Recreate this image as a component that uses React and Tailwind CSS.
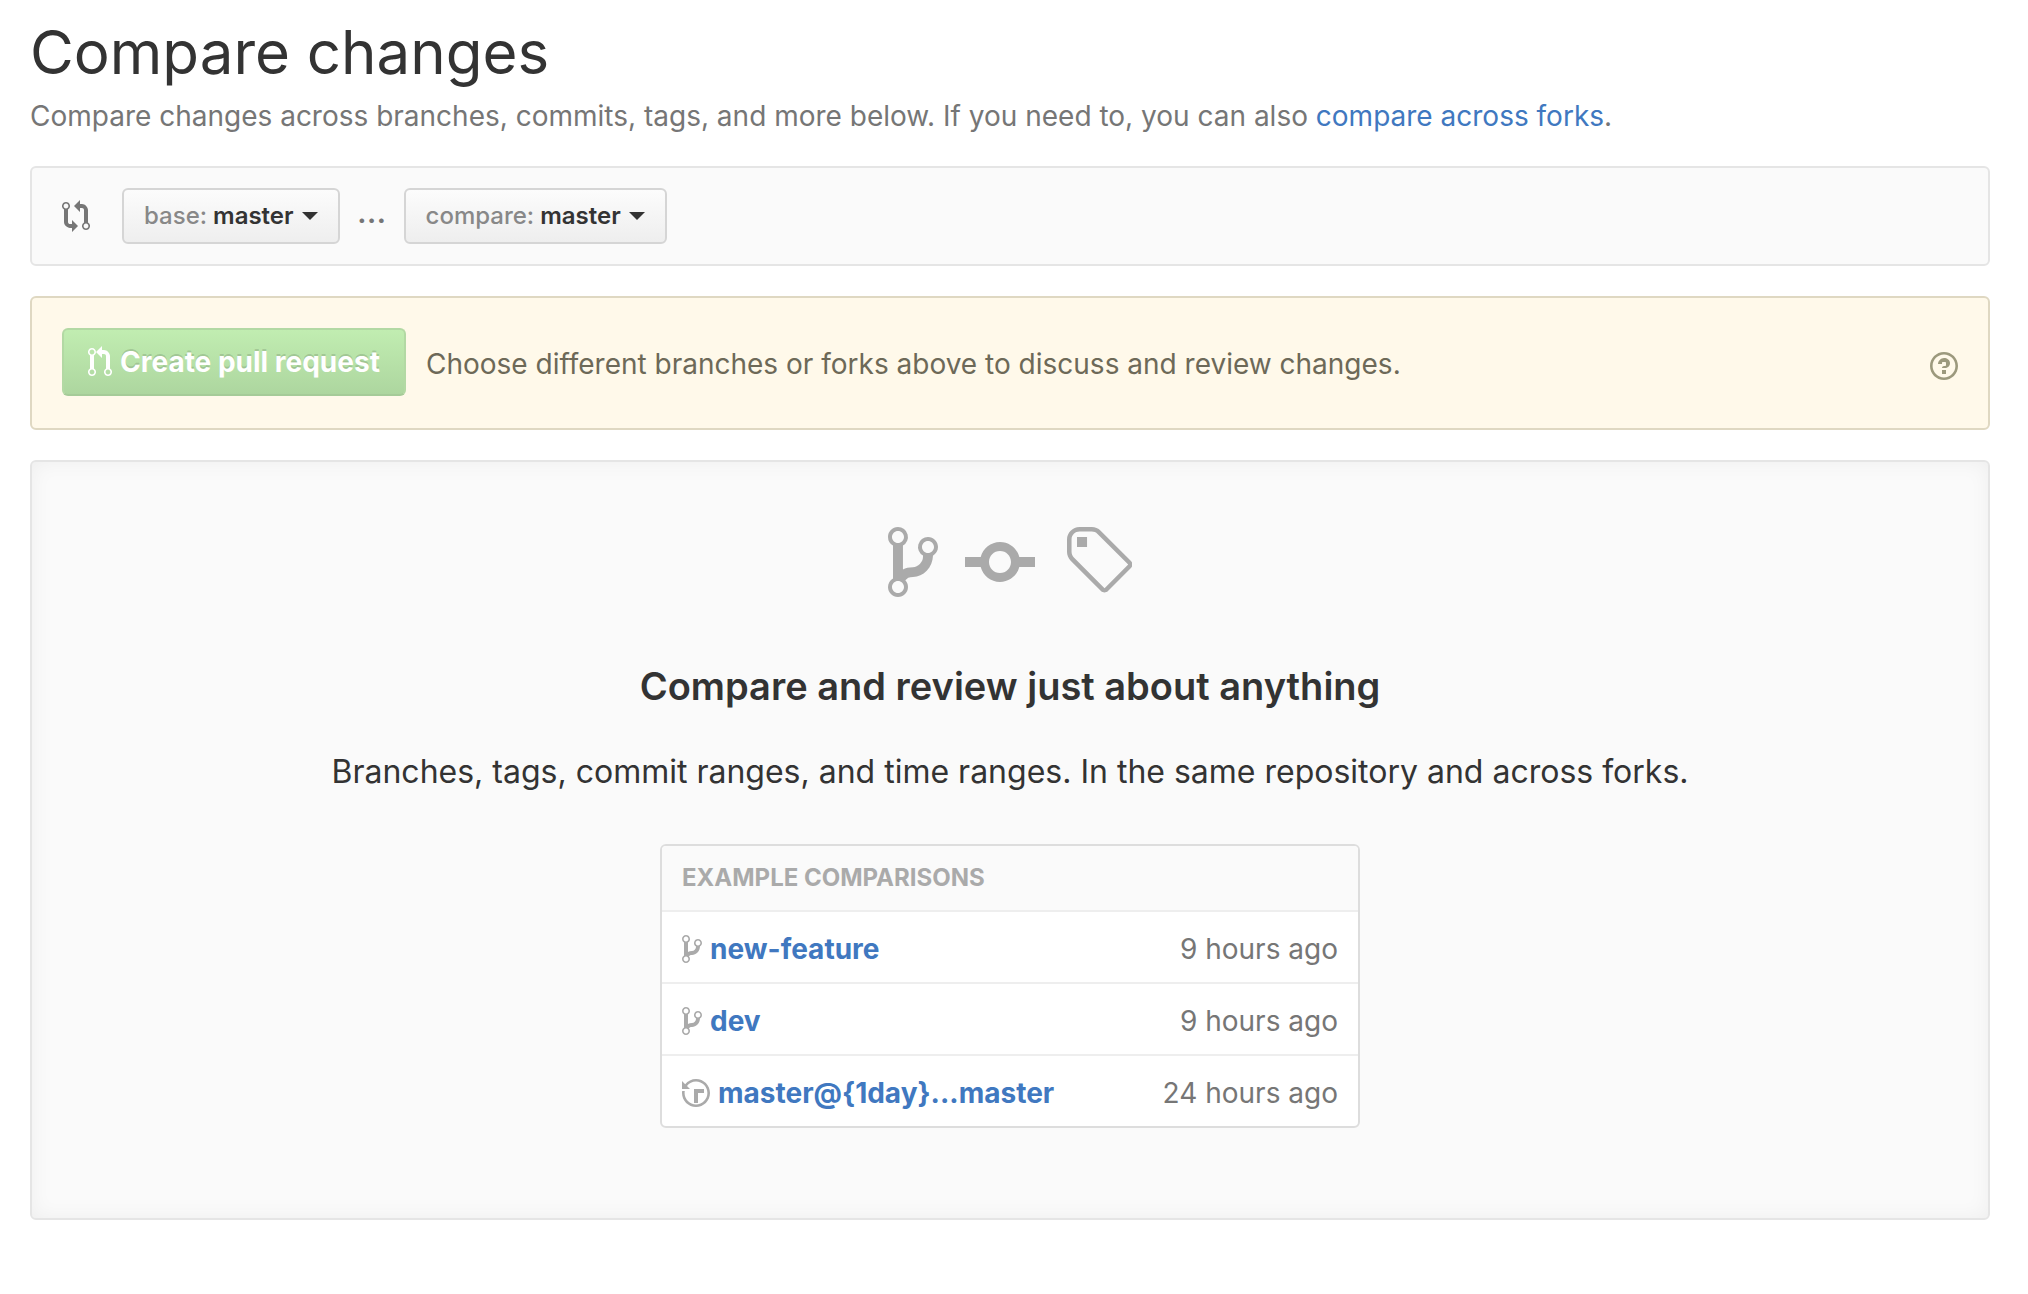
const paths = {
  branch:
    "M10 5c0-1.11-.89-2-2-2a1.993 1.993 0 0 0-1 3.72v.3c-.02.52-.23.98-.63 1.38-.4.4-.86.61-1.38.63-.83.02-1.48.16-2 .45V4.72a1.993 1.993 0 0 0-1-3.72C.88 1 0 1.89 0 3a2 2 0 0 0 1 1.72v6.56c-.59.35-1 .99-1 1.72 0 1.11.89 2 2 2 1.11 0 2-.89 2-2 0-.53-.2-1-.53-1.36.09-.06.48-.41.59-.47.25-.11.56-.17.94-.17 1.05-.05 1.95-.45 2.75-1.25S8.95 7.77 9 6.73h-.02C9.59 6.37 10 5.73 10 5zM2 1.8c.66 0 1.2.55 1.2 1.2 0 .65-.55 1.2-1.2 1.2C1.35 4.2.8 3.65.8 3c0-.65.55-1.2 1.2-1.2zm0 12.41c-.66 0-1.2-.55-1.2-1.2 0-.65.55-1.2 1.2-1.2.65 0 1.2.55 1.2 1.2 0 .65-.55 1.2-1.2 1.2zm6-8c-.66 0-1.2-.55-1.2-1.2 0-.65.55-1.2 1.2-1.2.65 0 1.2.55 1.2 1.2 0 .65-.55 1.2-1.2 1.2z",
  commit:
    "M10.86 7c-.45-1.72-2-3-3.86-3-1.86 0-3.41 1.28-3.86 3H0v2h3.14c.45 1.72 2 3 3.86 3 1.86 0 3.41-1.28 3.86-3H14V7h-3.14zM7 10.2c-1.22 0-2.2-.98-2.2-2.2 0-1.22.98-2.2 2.2-2.2 1.22 0 2.2.98 2.2 2.2 0 1.22-.98 2.2-2.2 2.2z",
  tag: "M7.73 1.73C7.26 1.26 6.62 1 5.96 1H3.5C2.13 1 1 2.13 1 3.5v2.47c0 .66.27 1.3.73 1.77l6.06 6.06c.39.39 1.02.39 1.41 0l4.59-4.59a.996.996 0 0 0 0-1.41L7.73 1.73zM2.38 7.09c-.31-.3-.47-.7-.47-1.13V3.5c0-.88.72-1.59 1.59-1.59h2.47c.42 0 .83.16 1.13.47l6.14 6.13-4.73 4.73-6.13-6.15zM3.01 3h2v2H3V3h.01z",
  pull: "M11 11.28V5c-.03-.78-.34-1.47-.94-2.06C9.46 2.35 8.78 2.03 8 2H7V0L4 3l3 3V4h1c.27.02.48.11.69.31.21.2.3.42.31.69v6.28A1.993 1.993 0 0 0 10 15a1.993 1.993 0 0 0 1-3.72zm-1 2.92c-.66 0-1.2-.55-1.2-1.2 0-.65.55-1.2 1.2-1.2.65 0 1.2.55 1.2 1.2 0 .65-.55 1.2-1.2 1.2zM4 3c0-1.11-.89-2-2-2a1.993 1.993 0 0 0-1 3.72v6.56A1.993 1.993 0 0 0 2 15a1.993 1.993 0 0 0 1-3.72V4.72c.59-.34 1-.98 1-1.72zm-.8 10c0 .66-.55 1.2-1.2 1.2-.65 0-1.2-.55-1.2-1.2 0-.65.55-1.2 1.2-1.2.65 0 1.2.55 1.2 1.2zM2 4.2C1.34 4.2.8 3.65.8 3c0-.65.55-1.2 1.2-1.2.65 0 1.2.55 1.2 1.2 0 .65-.55 1.2-1.2 1.2z",
  compare:
    "M5 12H4c-.27-.02-.48-.11-.69-.31-.21-.2-.3-.42-.31-.69V4.72A1.993 1.993 0 0 0 2 1a1.993 1.993 0 0 0-1 3.72V11c.03.78.34 1.47.94 2.06.6.59 1.28.91 2.06.94h1v2l3-3-3-3v2zM2 1.8c.66 0 1.2.55 1.2 1.2 0 .65-.55 1.2-1.2 1.2C1.35 4.2.8 3.65.8 3c0-.65.55-1.2 1.2-1.2zm11 9.48V5c-.03-.78-.34-1.47-.94-2.06-.6-.59-1.28-.91-2.06-.94H9V0L6 3l3 3V4h1c.27.02.48.11.69.31.21.2.3.42.31.69v6.28A1.993 1.993 0 0 0 12 15a1.993 1.993 0 0 0 1-3.72zm-1 2.92c-.66 0-1.2-.55-1.2-1.2 0-.65.55-1.2 1.2-1.2.65 0 1.2.55 1.2 1.2 0 .65-.55 1.2-1.2 1.2z",
  question:
    "M6 10h2v2H6v-2zm4-3.5C10 8.64 8 9 8 9H6c0-.55.45-1 1-1h.5c.28 0 .5-.22.5-.5v-1c0-.28-.22-.5-.5-.5h-1c-.28 0-.5.22-.5.5V7H4c0-1.5 1.5-3 3-3s3 1 3 2.5zM7 2.3c3.14 0 5.7 2.56 5.7 5.7s-2.56 5.7-5.7 5.7A5.71 5.71 0 0 1 1.3 8c0-3.14 2.56-5.7 5.7-5.7zM7 1C3.14 1 0 4.14 0 8s3.14 7 7 7 7-3.14 7-7-3.14-7-7-7z",
  history:
    "M8 13H6V6h5v2H8v5zM7 1C4.81 1 2.87 2.02 1.59 3.59L0 2v4h4L2.5 4.5C3.55 3.17 5.17 2.3 7 2.3c3.14 0 5.7 2.56 5.7 5.7s-2.56 5.7-5.7 5.7A5.71 5.71 0 0 1 1.3 8c0-.34.03-.67.09-1H.08C.03 7.33 0 7.66 0 8c0 3.86 3.14 7 7 7s7-3.14 7-7-3.14-7-7-7z",
};

function Icon({ name, units, className }) {
  return (
    <svg
      viewBox={`0 0 ${units} 16`}
      fill="currentColor"
      aria-hidden="true"
      className={className}
    >
      <path fillRule="evenodd" d={paths[name]} />
    </svg>
  );
}

function BranchButton({ label, branch }) {
  return (
    <button
      type="button"
      className="flex h-14 items-center rounded-md border-2 border-[#d5d5d5] bg-linear-to-b from-[#fcfcfc] to-[#eeeeee] px-5 text-2xl font-semibold text-[#333333]"
    >
      <span className="mr-1.5 font-medium text-[#888888]">{label}:</span>
      {branch}
      <span className="ml-2 h-0 w-0 border-x-8 border-t-8 border-x-transparent border-t-[#333333]" />
    </button>
  );
}

const comparisons = [
  { icon: "branch", name: "new-feature", time: "9 hours ago" },
  { icon: "branch", name: "dev", time: "9 hours ago" },
  { icon: "history", name: "master@{1day}...master", time: "24 hours ago" },
];

export default function App() {
  return (
    <main className="min-h-screen bg-white pt-4 pr-[38px] pb-[74px] pl-[30px] font-['Inter',sans-serif] text-[#333333]">
      <h1 className="text-[60px] leading-[72px]">Compare changes</h1>
      <p className="mt-2 text-[28px] leading-10 text-[#767676]">
        Compare changes across branches, commits, tags, and more below. If you
        need to, you can also{" "}
        <a href="#forks" className="text-[#4078c0]">
          compare across forks
        </a>
        .
      </p>

      <div className="mt-[30px] flex h-25 items-center rounded-md border-2 border-[#e5e5e5] bg-[#fafafa] px-[30px]">
        <Icon name="compare" units={14} className="mr-8 h-8 w-7 text-[#767676]" />
        <BranchButton label="base" branch="master" />
        <span className="w-16 pb-2 text-center text-[32px] font-medium text-[#767676]">
          ...
        </span>
        <BranchButton label="compare" branch="master" />
      </div>

      <div className="mt-[30px] flex items-end rounded-md border-2 border-[#dfd8c2] bg-[#fff9ea] px-[30px] py-[30px] text-[28px] text-[#6d6958]">
        <button
          type="button"
          disabled
          className="mb-0.5 flex h-[68px] items-center rounded-md border-2 border-[#b3d9a4] border-b-[#a5cb98] bg-linear-to-b from-[#c1edb1] to-[#add69f] px-6 font-bold text-white [text-shadow:0_-2px_0_rgba(0,0,0,0.12)]"
        >
          <Icon name="pull" units={12} className="mr-2 h-8 w-6" />
          Create pull request
        </button>
        <p className="ml-5 leading-[68px]">
          Choose different branches or forks above to discuss and review
          changes.
        </p>
        <a
          href="#help"
          aria-label="Help"
          className="ml-auto flex h-16 items-center text-[#9c997d]"
        >
          <Icon name="question" units={14} className="h-8 w-7" />
        </a>
      </div>

      <section className="mt-[30px] flex flex-col items-center rounded-md border-2 border-[#e5e5e5] bg-[#fafafa] px-8 pt-15 pb-[90px] shadow-[inset_0_0_20px_rgba(0,0,0,0.05)]">
        <div className="flex gap-[27px] text-[#aaaaaa]">
          <Icon name="branch" units={10} className="h-20 w-[50px]" />
          <Icon name="commit" units={14} className="h-20 w-[70px]" />
          <Icon name="tag" units={14} className="h-20 w-[70px]" />
        </div>
        <h2 className="mt-15 text-[38px] leading-12 font-semibold">
          Compare and review just about anything
        </h2>
        <p className="mt-[38px] text-[32px] leading-12">
          Branches, tags, commit ranges, and time ranges. In the same repository
          and across forks.
        </p>

        <div className="mt-12 w-full max-w-[700px] overflow-hidden rounded-md border-2 border-[#dddddd] bg-white">
          <h3 className="bg-[#fafafa] px-5 text-2xl leading-16 font-bold text-[#aaaaaa]">
            EXAMPLE COMPARISONS
          </h3>
          <ul>
            {comparisons.map((item) => (
              <li
                key={item.name}
                className="flex h-18 items-center border-t-2 border-[#eeeeee] px-5 pt-1 text-[28px] text-[#767676]"
              >
                {item.icon === "branch" ? (
                  <Icon name="branch" units={10} className="mr-2 h-8 w-5 text-[#aaaaaa]" />
                ) : (
                  <Icon name="history" units={14} className="mr-2 h-8 w-7 text-[#aaaaaa]" />
                )}
                <a href="#compare" className="font-bold text-[#4078c0]">
                  {item.name}
                </a>
                <span className="ml-auto">{item.time}</span>
              </li>
            ))}
          </ul>
        </div>
      </section>
    </main>
  );
}
